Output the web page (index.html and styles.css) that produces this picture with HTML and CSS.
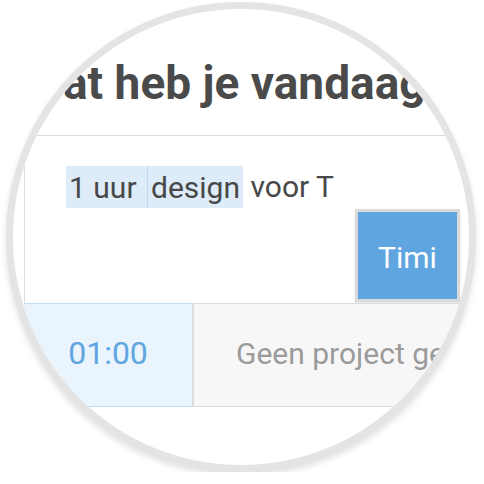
FILE: index.html
```html
<!DOCTYPE html>
<html lang="nl">
<head>
  <meta charset="UTF-8">
  <meta name="viewport" content="width=device-width, initial-scale=1.0">
  <title>Tijdregistratie</title>
  <link rel="stylesheet" href="styles.css">
</head>
<body>
  <div class="lens">
    <div class="view">
      <h1 class="title">at heb je vandaag gedaan?</h1>
      <div class="card">
        <div class="entry">
          <div class="entry-text"><span class="tag">1 uur </span><span class="tag">design</span> voor T</div>
          <button type="button" class="start">Timi</button>
        </div>
        <div class="meta">
          <div class="duration">01:00</div>
          <div class="project">Geen project geselecteerd</div>
        </div>
      </div>
    </div>
  </div>
</body>
</html>
```

FILE: styles.css
```css
:root {
  --color-texto: #484848;
  --color-azul: #5fa6e0;
  --color-azul-claro: #eaf4fc;
  --color-borde: #dcdcdc;
}

* {
  box-sizing: border-box;
}

body {
  margin: 0;
  background: white;
  font-family: Roboto, 'Liberation Sans', Arial, sans-serif;
  color: var(--color-texto);
}

.lens {
  width: 470px;
  height: 470px;
  margin: 2px 0 0 6px;
  border: 7px solid #e4e4e4;
  border-radius: 50%;
  overflow: hidden;
  background: white;
  box-shadow: 0 4px 6px rgba(0, 0, 0, 0.12);
}

.view {
  width: 700px;
  padding-top: 47px;
}

.title {
  margin: 0;
  padding-left: 50px;
  font-size: 46px;
  font-weight: 700;
  line-height: 54px;
  white-space: nowrap;
  color: #4a4a4a;
}

.card {
  margin: 25px 0 0 11px;
  border-top: 1px solid var(--color-borde);
  border-left: 1px solid var(--color-borde);
}

.entry {
  padding: 30px 0 1px 0;
}

.entry-text {
  padding-left: 41px;
  font-size: 30px;
  line-height: 42px;
  white-space: nowrap;
}

.tag {
  background: #ddecf8;
  padding: 3.5px 3px;
}

.tag + .tag {
  border-left: 1px solid #bcdaf3;
}

.start {
  display: block;
  width: 105px;
  height: 93px;
  margin: 1px 0 0 330px;
  padding: 3px 0 0 0;
  border: 3px solid #dadada;
  background: var(--color-azul);
  color: white;
  font-family: inherit;
  font-size: 30px;
  box-shadow: 0 2px 3px rgba(0, 0, 0, 0.1);
}

.meta {
  display: flex;
  height: 104px;
}

.duration {
  display: flex;
  align-items: center;
  justify-content: center;
  width: 170px;
  padding-bottom: 4px;
  margin-left: -1px;
  background: var(--color-azul-claro);
  border-top: 1px solid #c2ddf4;
  border-bottom: 1px solid #c2ddf4;
  border-right: 2px solid #dddddd;
  color: var(--color-azul);
  font-size: 32px;
}

.project {
  flex: 1;
  display: flex;
  align-items: center;
  padding: 0 0 4px 42px;
  background: #f7f7f7;
  border-top: 1px solid var(--color-borde);
  border-bottom: 1px solid var(--color-borde);
  color: #9b9b9b;
  font-size: 30px;
  white-space: nowrap;
}
```
